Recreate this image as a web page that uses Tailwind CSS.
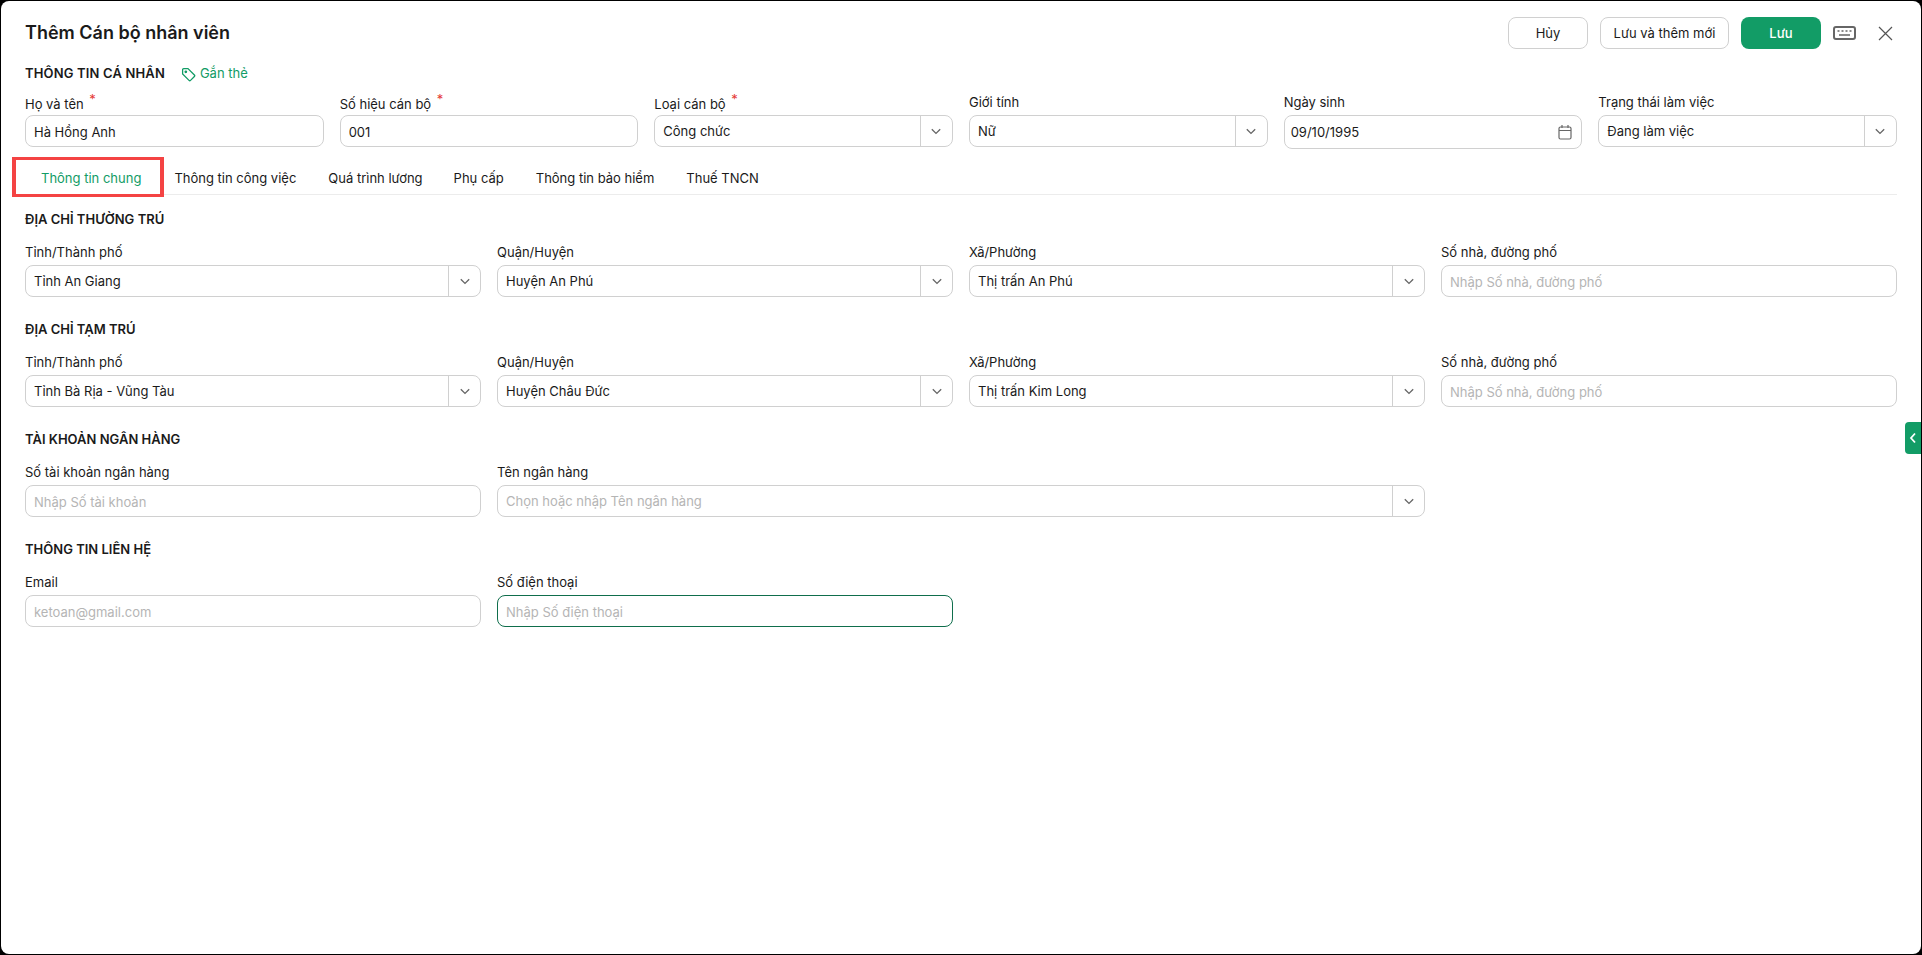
<!doctype html>
<html>
  <head>
    <title>Thêm Cán bộ nhân viên</title>
    <meta charset="UTF-8" />
    <script src="https://cdn.jsdelivr.net/npm/@tailwindcss/browser@4"></script>
  </head>
  <body class="bg-[#0b3d2e] font-['Inter','Noto_Sans',sans-serif] text-[13px] text-[#1a1a1a]">
    <div class="relative w-[1922px] h-[955px] overflow-hidden bg-black pt-px pl-px pr-px pb-px">
      <div class="relative h-full bg-white rounded-lg pt-4 pl-6 pr-6 overflow-hidden">
        <!-- header -->
        <div class="flex items-center justify-between h-8">
          <h1 class="text-lg font-semibold">Thêm Cán bộ nhân viên</h1>
          <div class="flex items-center">
            <button class="w-20 h-8 pt-0.5 border border-[#d0d0d0] rounded-lg">Hủy</button>
            <button class="w-[129px] h-8 pt-0.5 ml-3 border border-[#d0d0d0] rounded-lg">Lưu và thêm mới</button>
            <button class="w-20 h-8 pt-0.5 ml-3 bg-[#129c66] text-white font-medium rounded-lg">Lưu</button>
            <svg class="ml-3 w-[23px] h-[14px] text-[#666]" viewBox="0 0 23 14" fill="none" stroke="currentColor">
              <rect x="1" y="1" width="21" height="12" rx="2" stroke-width="2" />
              <path d="M4.500 5h2M8.500 5h2M12.500 5h2M16.500 5h2M6 9h11" stroke-width="1.400" />
            </svg>
            <svg class="ml-[22px] mr-1 w-[15px] h-[15px] text-[#555]" viewBox="0 0 15 15" fill="none" stroke="currentColor" stroke-width="1.200">
              <path d="M1 1l13 13M14 1L1 14" />
            </svg>
          </div>
        </div>

        <!-- personal info -->
        <div class="flex items-center h-5 mt-[15px]">
          <span class="font-semibold tracking-[0.15px]">THÔNG TIN CÁ NHÂN</span>
          <svg class="ml-4 w-[15px] h-[15px] text-[#129c66]" viewBox="0 0 14 14" fill="none" stroke="currentColor" stroke-width="1.200">
            <path d="M1.500 2.500a1 1 0 0 1 1-1h4l6 6a1 1 0 0 1 0 1.400l-3.600 3.600a1 1 0 0 1-1.400 0l-6-6z" />
            <circle cx="4.500" cy="4.500" r="0.700" />
          </svg>
          <span class="ml-1 text-[#129c66]">Gắn thẻ</span>
        </div>
        <div class="grid grid-cols-6 gap-x-4 mt-[9px]">
          <div>
            <div class="h-[18px] mb-1 leading-[18px]">Họ và tên <span class="text-[#e53935] align-super text-[13px] leading-none ml-0.5">*</span></div>
            <input class="w-full h-8 px-2 pt-0.5 border border-[#d0d0d0] rounded-lg outline-none" value="Hà Hồng Anh" />
          </div>
          <div>
            <div class="h-[18px] mb-1 leading-[18px]">Số hiệu cán bộ <span class="text-[#e53935] align-super text-[13px] leading-none ml-0.5">*</span></div>
            <input class="w-full h-8 px-2 pt-0.5 border border-[#d0d0d0] rounded-lg outline-none" value="001" />
          </div>
          <div>
            <div class="h-[18px] mb-1 leading-[18px]">Loại cán bộ <span class="text-[#e53935] align-super text-[13px] leading-none ml-0.5">*</span></div>
            <div class="flex items-center h-8 border border-[#d0d0d0] rounded-lg">
              <span class="flex-1 px-2 pt-0.5">Công chức</span>
              <span class="flex items-center justify-center w-8 h-full border-l border-[#d0d0d0]"><svg class="w-3 h-3 text-[#666]" viewBox="0 0 10 10" fill="none" stroke="currentColor" stroke-width="1.100"><path d="M1.500 3.500L5 7l3.500-3.500" /></svg></span>
            </div>
          </div>
          <div>
            <div class="h-[18px] mb-1 leading-[18px]">Giới tính</div>
            <div class="flex items-center h-8 border border-[#d0d0d0] rounded-lg">
              <span class="flex-1 px-2 pt-0.5">Nữ</span>
              <span class="flex items-center justify-center w-8 h-full border-l border-[#d0d0d0]"><svg class="w-3 h-3 text-[#666]" viewBox="0 0 10 10" fill="none" stroke="currentColor" stroke-width="1.100"><path d="M1.500 3.500L5 7l3.500-3.500" /></svg></span>
            </div>
          </div>
          <div>
            <div class="h-[18px] mb-1 leading-[18px]">Ngày sinh</div>
            <div class="flex items-center h-[34px] -mb-[2px] border border-[#d0d0d0] rounded-lg">
              <span class="flex-1 px-[6px] pt-0.5">09/10/1995</span>
              <svg class="w-[14px] h-[16px] mr-[9px] text-[#666]" viewBox="0 0 14 16" fill="none" stroke="currentColor" stroke-width="1.200">
                <rect x="1" y="3" width="12" height="12" rx="1.500" />
                <path d="M1 6.500h12M4 1v3M10 1v3" />
              </svg>
            </div>
          </div>
          <div>
            <div class="h-[18px] mb-1 leading-[18px]">Trạng thái làm việc</div>
            <div class="flex items-center h-8 border border-[#d0d0d0] rounded-lg">
              <span class="flex-1 px-2 pt-0.5">Đang làm việc</span>
              <span class="flex items-center justify-center w-8 h-full border-l border-[#d0d0d0]"><svg class="w-3 h-3 text-[#666]" viewBox="0 0 10 10" fill="none" stroke="currentColor" stroke-width="1.100"><path d="M1.500 3.500L5 7l3.500-3.500" /></svg></span>
            </div>
          </div>
        </div>

        <!-- tabs -->
        <div class="flex items-center h-[48px] pt-[17px] border-b border-[#ececec]">
          <span class="pl-4 pr-[17px] text-[#129c66]">Thông tin chung</span>
          <span class="px-4">Thông tin công việc</span>
          <span class="pl-4 pr-[15px]">Quá trình lương</span>
          <span class="px-4">Phụ cấp</span>
          <span class="px-4">Thông tin bảo hiểm</span>
          <span class="px-4">Thuế TNCN</span>
        </div>
        <div class="absolute left-[11px] top-[156px] w-[152px] h-[40px] border-x-4 border-y-[3px] border-[#f44343]"></div>

        <!-- thuong tru -->
        <div class="h-5 mt-[14px] font-semibold leading-5">ĐỊA CHỈ THƯỜNG TRÚ</div>
        <div class="grid grid-cols-4 gap-x-4 mt-[14px]">
          <div>
            <div class="h-[18px] mb-1 leading-[18px]">Tỉnh/Thành phố</div>
            <div class="flex items-center h-8 border border-[#d0d0d0] rounded-lg">
              <span class="flex-1 px-2 pt-0.5">Tỉnh An Giang</span>
              <span class="flex items-center justify-center w-8 h-full border-l border-[#d0d0d0]"><svg class="w-3 h-3 text-[#666]" viewBox="0 0 10 10" fill="none" stroke="currentColor" stroke-width="1.100"><path d="M1.500 3.500L5 7l3.500-3.500" /></svg></span>
            </div>
          </div>
          <div>
            <div class="h-[18px] mb-1 leading-[18px]">Quận/Huyện</div>
            <div class="flex items-center h-8 border border-[#d0d0d0] rounded-lg">
              <span class="flex-1 px-2 pt-0.5">Huyện An Phú</span>
              <span class="flex items-center justify-center w-8 h-full border-l border-[#d0d0d0]"><svg class="w-3 h-3 text-[#666]" viewBox="0 0 10 10" fill="none" stroke="currentColor" stroke-width="1.100"><path d="M1.500 3.500L5 7l3.500-3.500" /></svg></span>
            </div>
          </div>
          <div>
            <div class="h-[18px] mb-1 leading-[18px]">Xã/Phường</div>
            <div class="flex items-center h-8 border border-[#d0d0d0] rounded-lg">
              <span class="flex-1 px-2 pt-0.5">Thị trấn An Phú</span>
              <span class="flex items-center justify-center w-8 h-full border-l border-[#d0d0d0]"><svg class="w-3 h-3 text-[#666]" viewBox="0 0 10 10" fill="none" stroke="currentColor" stroke-width="1.100"><path d="M1.500 3.500L5 7l3.500-3.500" /></svg></span>
            </div>
          </div>
          <div>
            <div class="h-[18px] mb-1 leading-[18px]">Số nhà, đường phố</div>
            <input class="w-full h-8 px-2 pt-0.5 border border-[#d0d0d0] rounded-lg outline-none placeholder:text-[#b5b5b5]" placeholder="Nhập Số nhà, đường phố" />
          </div>
        </div>

        <!-- tam tru -->
        <div class="h-5 mt-[22px] font-semibold leading-5">ĐỊA CHỈ TẠM TRÚ</div>
        <div class="grid grid-cols-4 gap-x-4 mt-[14px]">
          <div>
            <div class="h-[18px] mb-1 leading-[18px]">Tỉnh/Thành phố</div>
            <div class="flex items-center h-8 border border-[#d0d0d0] rounded-lg">
              <span class="flex-1 px-2 pt-0.5">Tỉnh Bà Rịa - Vũng Tàu</span>
              <span class="flex items-center justify-center w-8 h-full border-l border-[#d0d0d0]"><svg class="w-3 h-3 text-[#666]" viewBox="0 0 10 10" fill="none" stroke="currentColor" stroke-width="1.100"><path d="M1.500 3.500L5 7l3.500-3.500" /></svg></span>
            </div>
          </div>
          <div>
            <div class="h-[18px] mb-1 leading-[18px]">Quận/Huyện</div>
            <div class="flex items-center h-8 border border-[#d0d0d0] rounded-lg">
              <span class="flex-1 px-2 pt-0.5">Huyện Châu Đức</span>
              <span class="flex items-center justify-center w-8 h-full border-l border-[#d0d0d0]"><svg class="w-3 h-3 text-[#666]" viewBox="0 0 10 10" fill="none" stroke="currentColor" stroke-width="1.100"><path d="M1.500 3.500L5 7l3.500-3.500" /></svg></span>
            </div>
          </div>
          <div>
            <div class="h-[18px] mb-1 leading-[18px]">Xã/Phường</div>
            <div class="flex items-center h-8 border border-[#d0d0d0] rounded-lg">
              <span class="flex-1 px-2 pt-0.5">Thị trấn Kim Long</span>
              <span class="flex items-center justify-center w-8 h-full border-l border-[#d0d0d0]"><svg class="w-3 h-3 text-[#666]" viewBox="0 0 10 10" fill="none" stroke="currentColor" stroke-width="1.100"><path d="M1.500 3.500L5 7l3.500-3.500" /></svg></span>
            </div>
          </div>
          <div>
            <div class="h-[18px] mb-1 leading-[18px]">Số nhà, đường phố</div>
            <input class="w-full h-8 px-2 pt-0.5 border border-[#d0d0d0] rounded-lg outline-none placeholder:text-[#b5b5b5]" placeholder="Nhập Số nhà, đường phố" />
          </div>
        </div>

        <!-- ngan hang -->
        <div class="h-5 mt-[22px] font-semibold leading-5">TÀI KHOẢN NGÂN HÀNG</div>
        <div class="grid grid-cols-4 gap-x-4 mt-[14px]">
          <div>
            <div class="h-[18px] mb-1 leading-[18px]">Số tài khoản ngân hàng</div>
            <input class="w-full h-8 px-2 pt-0.5 border border-[#d0d0d0] rounded-lg outline-none placeholder:text-[#b5b5b5]" placeholder="Nhập Số tài khoản" />
          </div>
          <div class="col-span-2">
            <div class="h-[18px] mb-1 leading-[18px]">Tên ngân hàng</div>
            <div class="flex items-center h-8 border border-[#d0d0d0] rounded-lg">
              <span class="flex-1 px-2 pt-0.5 text-[#b5b5b5]">Chọn hoặc nhập Tên ngân hàng</span>
              <span class="flex items-center justify-center w-8 h-full border-l border-[#d0d0d0]"><svg class="w-3 h-3 text-[#666]" viewBox="0 0 10 10" fill="none" stroke="currentColor" stroke-width="1.100"><path d="M1.500 3.500L5 7l3.500-3.500" /></svg></span>
            </div>
          </div>
        </div>

        <!-- lien he -->
        <div class="h-5 mt-[22px] font-semibold leading-5">THÔNG TIN LIÊN HỆ</div>
        <div class="grid grid-cols-4 gap-x-4 mt-[14px]">
          <div>
            <div class="h-[18px] mb-1 leading-[18px]">Email</div>
            <input class="w-full h-8 px-2 pt-0.5 border border-[#d0d0d0] rounded-lg outline-none placeholder:text-[#b5b5b5]" placeholder="ketoan@gmail.com" />
          </div>
          <div>
            <div class="h-[18px] mb-1 leading-[18px]">Số điện thoại</div>
            <input class="w-full h-8 px-2 pt-0.5 border border-[#0f6e4c] rounded-lg outline-none placeholder:text-[#b5b5b5]" placeholder="Nhập Số điện thoại" />
          </div>
        </div>

        <!-- side toggle -->
        <div class="absolute right-0 top-[421px] flex items-center justify-center w-4 h-8 bg-[#129c66] rounded-l">
          <svg class="w-2 h-3 text-white" viewBox="0 0 8 12" fill="none" stroke="currentColor" stroke-width="1.800"><path d="M6 1.500L2 6l4 4.500" /></svg>
        </div>
      </div>
    </div>
  </body>
</html>
